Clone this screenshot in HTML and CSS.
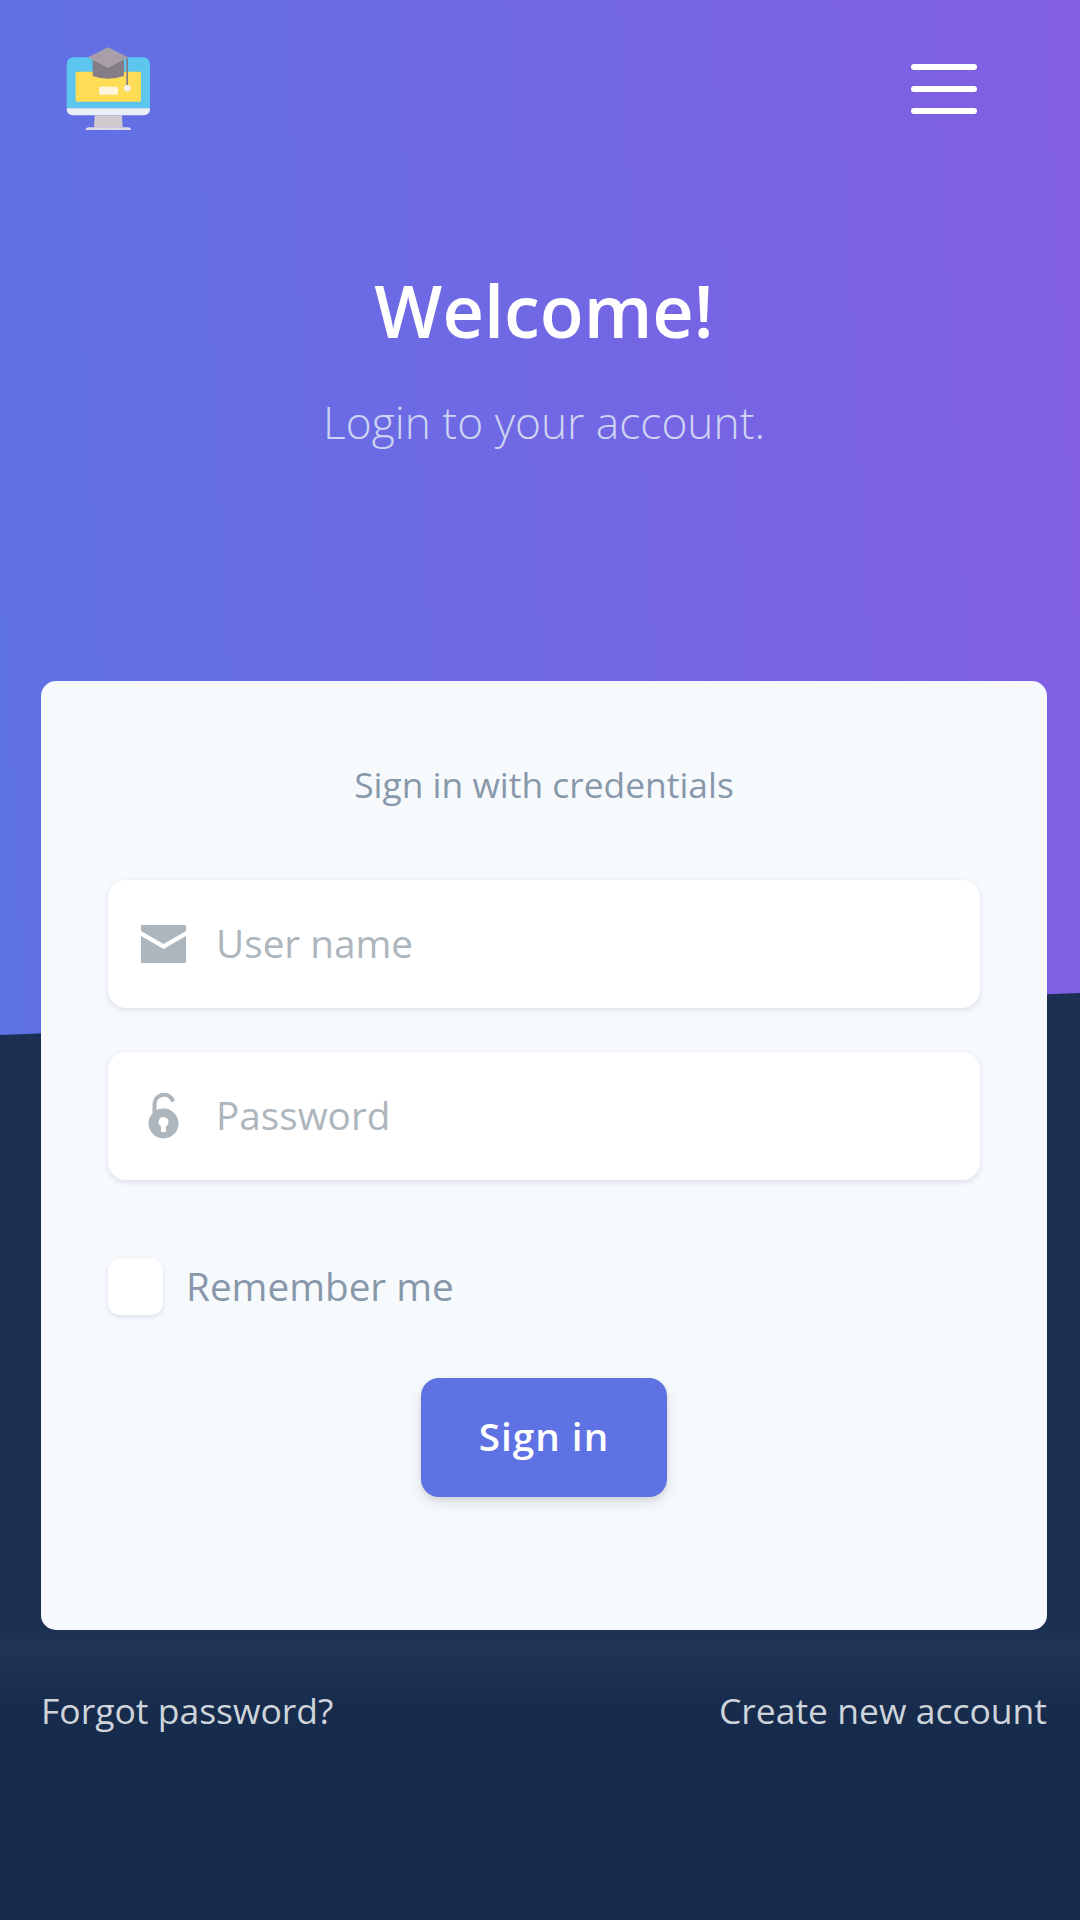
FILE: index.html
```html
<!DOCTYPE html>
<html lang="en">
<head>
  <meta charset="UTF-8">
  <title>Login</title>
  <link rel="stylesheet" href="styles.css">
</head>
<body>

  <!-- Gradient header -->
  <header class="hero">
    <nav class="topbar">
      <a class="logo" href="#">
        <svg width="140" height="130" viewBox="0 0 420 390">
          <path d="M80 265V132a20 20 0 0 1 20-20h210a20 20 0 0 1 20 20v133z" fill="#5cc6ee"/>
          <rect x="107" y="155" width="196" height="90" rx="4" fill="#ffdc56"/>
          <rect x="177" y="200" width="57" height="24" rx="5" fill="#fdf6dc"/>
          <path d="M80 265h250v3a18 18 0 0 1-18 18H98a18 18 0 0 1-18-18z" fill="#e9eff6"/>
          <path d="M164 286h82l2 36h-86z" fill="#cfc9d0"/>
          <path d="M137 330q0-8 10-8h116q10 0 10 8z" fill="#dcdae2"/>
          <path d="M158 118v50q46 16 94 0v-50z" fill="#857d86"/>
          <path d="M144 112l60-30 60 30-60 32z" fill="#a89fa9"/>
          <rect x="259" y="114" width="5" height="82" fill="#857d86"/>
          <circle cx="262" cy="205" r="10" fill="#f4eff0"/>
        </svg>
      </a>
      <button class="menu-btn" type="button" title="Menu">
        <span></span>
        <span></span>
        <span></span>
      </button>
    </nav>
    <div class="hero-text">
      <h1>Welcome!</h1>
      <p>Login to your account.</p>
    </div>
  </header>

  <!-- Login card -->
  <main class="content">
    <form class="login-card">
      <h2>Sign in with credentials</h2>

      <label class="field">
        <svg class="field-icon" width="46" height="38" viewBox="0 0 46 38">
          <path d="M1 0h43a1 1 0 0 1 1 1v5L22.500 19 0 6V1a1 1 0 0 1 1-1z" fill="#adb5bd"/>
          <path d="M0 11l22.500 13L45 11v26a1 1 0 0 1-1 1H1a1 1 0 0 1-1-1z" fill="#adb5bd"/>
        </svg>
        <input type="text" name="user" placeholder="User name">
      </label>

      <label class="field">
        <svg class="field-icon" width="46" height="46" viewBox="0 0 46 46">
          <path d="M13.500 20v-9a9.500 9.500 0 0 1 18-4" fill="none" stroke="#adb5bd" stroke-width="4" stroke-linecap="round"/>
          <path fill-rule="evenodd" d="M22.500 15.500a15 15 0 1 1 0 30 15 15 0 0 1 0-30zm0 8.500a5 5 0 0 0-2.500 9.300V39h5v-5.700A5 5 0 0 0 22.500 24z" fill="#adb5bd"/>
        </svg>
        <input type="password" name="password" placeholder="Password">
      </label>

      <label class="remember">
        <input type="checkbox" name="remember">
        <span>Remember me</span>
      </label>

      <button class="submit-btn" type="submit">Sign in</button>
    </form>

    <div class="links">
      <a href="#">Forgot password?</a>
      <a href="#">Create new account</a>
    </div>
  </main>

</body>
</html>
```

FILE: styles.css
```css
* {
  box-sizing: border-box;
}

body {
  margin: 0;
  height: 1920px;
  overflow: hidden;
  font-family: "Open Sans", Arial, sans-serif;
  background: linear-gradient(180deg, #1b2f52 1000px, #1c3053 1630px, #1f3456 1645px, #172b4d 1710px);
}

.hero {
  height: 1035px;
  padding: 20px 33px 0 41px;
  background: linear-gradient(87deg, #5e72e4 0%, #825ee4 100%);
  clip-path: polygon(0 0, 100% 0, 100% 993px, 0 1035px);
}

.topbar {
  display: flex;
  justify-content: space-between;
  align-items: flex-start;
}

.logo {
  display: block;
  height: 130px;
  margin-left: -1px;
}

.menu-btn {
  display: flex;
  flex-direction: column;
  gap: 16px;
  width: 66px;
  margin: 44px 70px 0 0;
  padding: 0;
  border: none;
  background: none;
}

.menu-btn span {
  height: 6px;
  border-radius: 3px;
  background-color: #fff;
}

.hero-text {
  margin-top: 112px;
  text-align: center;
  color: #fff;
}

.hero-text h1 {
  margin: 0;
  font-size: 72px;
  font-weight: 600;
  line-height: 96px;
}

.hero-text p {
  margin: 32px 0 0;
  font-size: 44.3px;
  font-weight: 300;
  line-height: 64px;
  color: #ced4f2;
}

.content {
  margin-top: -354px;
  padding: 0 33px 0 41px;
  position: relative;
}

.login-card {
  display: flex;
  flex-direction: column;
  height: 949px;
  padding: 80px 67px 0;
  background-color: #f7fafd;
  border-radius: 15px;
}

.login-card h2 {
  margin: 0 0 73px;
  font-size: 35.4px;
  font-weight: 400;
  line-height: 46px;
  text-align: center;
  color: #8898aa;
}

.field {
  display: flex;
  align-items: center;
  gap: 27px;
  height: 128px;
  margin-bottom: 44px;
  padding-left: 33px;
  background-color: #fff;
  border-radius: 18px;
  box-shadow: 0 2px 6px rgba(50, 50, 93, 0.14);
}

.field-icon {
  flex: none;
}

.field input {
  flex: 1;
  min-width: 0;
  padding-bottom: 3px;
  border: none;
  outline: none;
  background: none;
  font-family: inherit;
  font-size: 38.7px;
  color: #525f7f;
}

.field input::placeholder {
  color: #adb5bd;
  opacity: 1;
}

.remember {
  display: flex;
  align-items: center;
  gap: 23px;
  margin-top: 35px;
  font-size: 38.7px;
  color: #8898aa;
}

.remember input {
  appearance: none;
  flex: none;
  width: 55px;
  height: 56px;
  margin: 0;
  background-color: #fff;
  border-radius: 12px;
  box-shadow: 0 2px 5px rgba(50, 50, 93, 0.14);
}

.remember span {
  margin-bottom: 2px;
}

.submit-btn {
  align-self: center;
  width: 246px;
  height: 119px;
  margin-top: 63px;
  padding-bottom: 4px;
  border: none;
  border-radius: 18px;
  background-color: #5e72e4;
  color: #fff;
  font-family: inherit;
  font-size: 38.7px;
  font-weight: 600;
  letter-spacing: 1px;
  box-shadow: 0 6px 14px rgba(50, 50, 93, 0.14), 0 2px 5px rgba(0, 0, 0, 0.08);
}

.links {
  display: flex;
  justify-content: space-between;
  margin-top: 56px;
  font-size: 35.5px;
  line-height: 48px;
}

.links a {
  color: #ced4da;
  text-decoration: none;
}
```
